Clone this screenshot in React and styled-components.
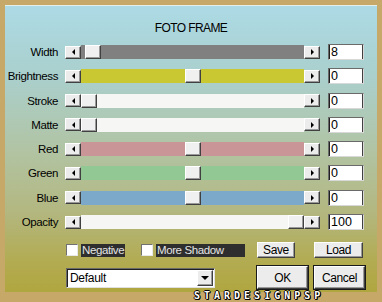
import React from "react";
import styled, { createGlobalStyle, css } from "styled-components";

const GlobalStyle = createGlobalStyle`
  html, body {
    margin: 0;
    padding: 0;
    background: #c6a868;
  }
  body {
    font-family: "Liberation Sans", Arial, sans-serif;
  }
`;

const Frame = styled.div`
  position: relative;
  width: 382px;
  height: 302px;
  box-sizing: border-box;
  padding: 5px 5px 10px 5px;
  background: #c6a868;
`;

const Panel = styled.div`
  height: 100%;
  box-sizing: border-box;
  border-top: 1px solid #e4efe8;
  background: linear-gradient(
    180deg,
    #acdae5 0%,
    #aacfcc 25%,
    #b1c4a4 50%,
    #b3b780 72%,
    #b2ab50 90%,
    #b0a640 100%
  );
  padding-top: 15px;
`;

const Title = styled.h1`
  margin: 0;
  text-align: center;
  font-size: 12px;
  font-weight: 400;
  line-height: 14px;
  letter-spacing: -0.6px;
  color: #000;
`;

const Rows = styled.div`
  display: flex;
  flex-direction: column;
  gap: 8.3px;
  margin-top: 9px;
`;

const Row = styled.div`
  display: flex;
  align-items: center;
  height: 16px;
`;

const Label = styled.span`
  width: 53px;
  margin-right: 7px;
  text-align: right;
  font-size: 11.5px;
  letter-spacing: -0.4px;
  color: #000;
  white-space: nowrap;
`;

const Slider = styled.div`
  display: flex;
  align-items: center;
  width: 255px;
  height: 14px;
`;

const raised = css`
  box-sizing: border-box;
  background: #ececec;
  border: 1px solid;
  border-color: #ffffff #404040 #404040 #ffffff;
  box-shadow: inset -1px -1px 0 #9a9a9a;
`;

const ArrowButton = styled.div`
  ${raised};
  display: flex;
  align-items: center;
  justify-content: center;
  width: 16px;
  height: 13px;
  flex: none;
  &::after {
    content: "";
    width: 0;
    height: 0;
    border-top: 3px solid transparent;
    border-bottom: 3px solid transparent;
    ${(p) =>
      p.$dir === "left"
        ? "border-right: 3px solid #000;"
        : "border-left: 3px solid #000;"}
  }
`;

const Track = styled.div`
  position: relative;
  flex: 1;
  height: 14px;
  background: ${(p) => p.$color};
`;

const Thumb = styled.div`
  ${raised};
  position: absolute;
  top: 0;
  width: 16px;
  height: 14px;
  background: #f0f0f0;
`;

const ValueBox = styled.div`
  box-sizing: border-box;
  width: 36px;
  height: 16px;
  margin-left: 8px;
  padding-left: 2px;
  background: #fff;
  border: 1px solid;
  border-color: #6a6a6a #d8d8d8 #d8d8d8 #6a6a6a;
  box-shadow: inset 1px 0 0 #202020, inset -1px 0 0 #404040;
  font-size: 12.5px;
  line-height: 14px;
  color: #000;
`;

const Controls = styled.div`
  display: grid;
  grid-template-columns: 191px 57px 57px;
  grid-template-rows: 16px 23px;
  row-gap: 8px;
  align-items: center;
  margin-top: 12px;
  padding-left: 61px;
`;

const Checks = styled.div`
  display: flex;
  align-items: center;
`;

const CheckItem = styled.label`
  display: flex;
  align-items: center;
  gap: 3px;
  margin-right: 16px;
`;

const Box = styled.span`
  box-sizing: border-box;
  width: 12px;
  height: 12px;
  background: #fff;
  border: 1px solid;
  border-color: #707070 #e8e8e8 #e8e8e8 #707070;
`;

const CheckText = styled.span`
  box-sizing: border-box;
  width: ${(p) => p.$w}px;
  height: 13px;
  padding-left: 1px;
  background: #2e2e2e;
  color: #e4e4e4;
  font-size: 11.5px;
  line-height: 13px;
  letter-spacing: -0.4px;
  white-space: nowrap;
  overflow: hidden;
`;

const Button = styled.div`
  ${raised};
  display: flex;
  align-items: center;
  justify-content: center;
  width: ${(p) => p.$w}px;
  height: ${(p) => p.$h}px;
  font-size: 12px;
  letter-spacing: -0.4px;
  color: #000;
  ${(p) =>
    p.$default &&
    css`
      outline: 1px solid #1a1a1a;
      outline-offset: 0;
    `}
`;

const Select = styled.div`
  box-sizing: border-box;
  display: flex;
  align-items: center;
  justify-content: space-between;
  width: 149px;
  height: 20px;
  background: #fff;
  border: 1px solid;
  border-color: #6a6a6a #e0e0e0 #e0e0e0 #6a6a6a;
  box-shadow: inset 1px 1px 0 #202020;
  padding: 0 1px 0 3px;
  font-size: 12px;
  letter-spacing: -0.3px;
`;

const SelectButton = styled.div`
  ${raised};
  display: flex;
  align-items: center;
  justify-content: center;
  width: 16px;
  height: 16px;
  &::after {
    content: "";
    border-left: 4px solid transparent;
    border-right: 4px solid transparent;
    border-top: 4px solid #000;
  }
`;

const Watermark = styled.div`
  position: absolute;
  left: 194px;
  top: 291px;
  font-family: "DejaVu Sans Mono", monospace;
  font-weight: 700;
  font-size: 10px;
  line-height: 9px;
  letter-spacing: 4px;
  color: #fff;
  text-shadow: 1px 0 0 #000, -1px 0 0 #000, 0 1px 0 #000, 0 -1px 0 #000,
    1px 1px 0 #000;
`;

const sliders = [
  { label: "Width", color: "#808080", pos: 0.02, value: "8" },
  { label: "Brightness", color: "#c9c832", pos: 0.5, value: "0" },
  { label: "Stroke", color: "#f6f6f4", pos: 0, value: "0" },
  { label: "Matte", color: "#f6f6f4", pos: 0, value: "0" },
  { label: "Red", color: "#c99597", pos: 0.5, value: "0" },
  { label: "Green", color: "#92c894", pos: 0.5, value: "0" },
  { label: "Blue", color: "#7ca9c9", pos: 0.5, value: "0" },
  { label: "Opacity", color: "#f6f6f4", pos: 1, value: "100" },
];

export default function App() {
  return (
    <>
      <GlobalStyle />
      <Frame>
        <Panel>
          <Title>FOTO FRAME</Title>
          <Rows>
            {sliders.map((s) => (
              <Row key={s.label}>
                <Label>{s.label}</Label>
                <Slider>
                  <ArrowButton $dir="left" />
                  <Track $color={s.color}>
                    <Thumb style={{ left: `calc((100% - 16px) * ${s.pos})` }} />
                  </Track>
                  <ArrowButton $dir="right" />
                </Slider>
                <ValueBox>{s.value}</ValueBox>
              </Row>
            ))}
          </Rows>
          <Controls>
            <Checks>
              <CheckItem>
                <Box />
                <CheckText $w={44}>Negative</CheckText>
              </CheckItem>
              <CheckItem>
                <Box />
                <CheckText $w={89}>More Shadow</CheckText>
              </CheckItem>
            </Checks>
            <Button $w={38} $h={16}>Save</Button>
            <Button $w={49} $h={16}>Load</Button>
            <Select>
              Default
              <SelectButton />
            </Select>
            <Button $w={51} $h={23} $default>OK</Button>
            <Button $w={51} $h={23} $default>Cancel</Button>
          </Controls>
        </Panel>
        <Watermark>STARDESIGNPSP</Watermark>
      </Frame>
    </>
  );
}
